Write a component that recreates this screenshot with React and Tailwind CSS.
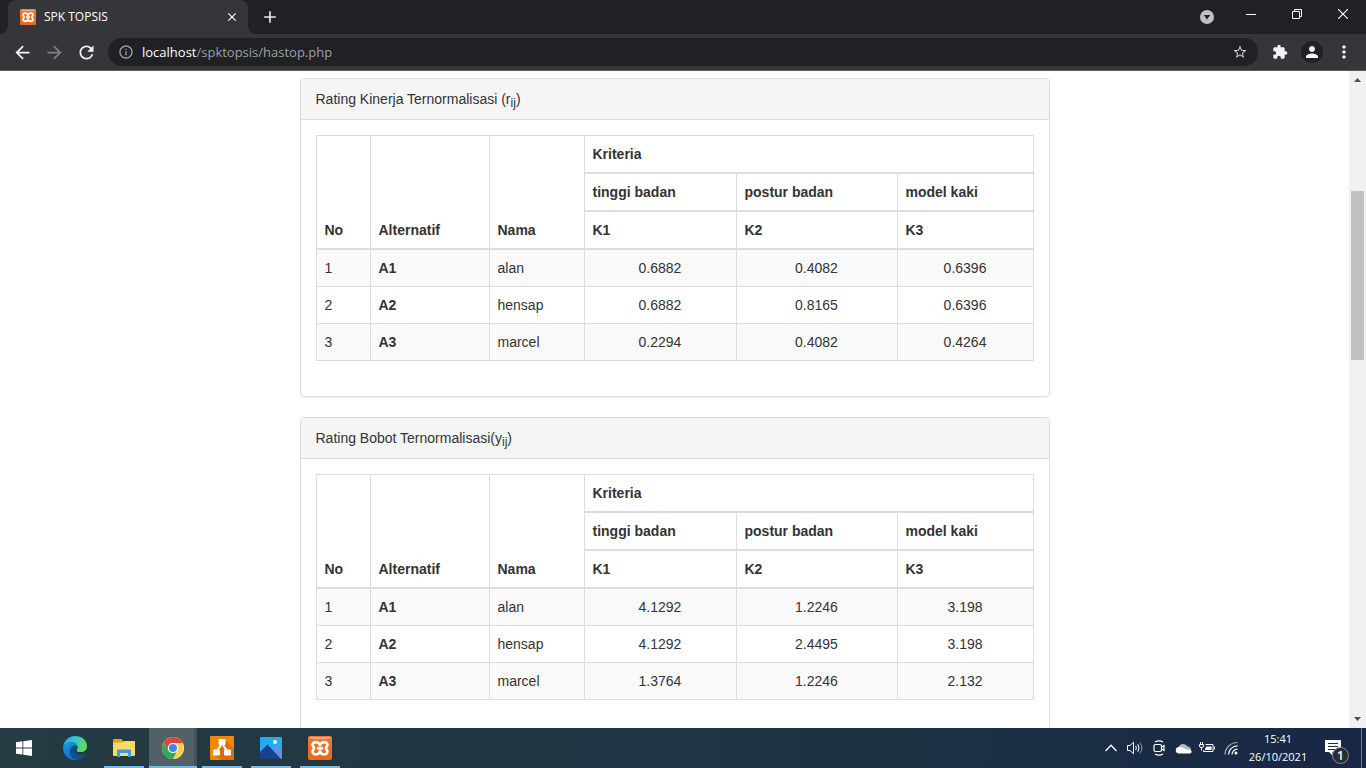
import React from "react";
import {
  MdAdd, MdArrowBack, MdArrowForward, MdClose, MdExtension, MdInfoOutline,
  MdMoreVert, MdPerson, MdRefresh, MdStarBorder,
} from "react-icons/md";

const people = [
  ["1", "A1", "alan"],
  ["2", "A2", "hensap"],
  ["3", "A3", "marcel"],
];

const panels = [
  {
    id: "r",
    title: "Rating Kinerja Ternormalisasi (r",
    values: [
      ["0.6882", "0.4082", "0.6396"],
      ["0.6882", "0.8165", "0.6396"],
      ["0.2294", "0.4082", "0.4264"],
    ],
  },
  {
    id: "y",
    title: "Rating Bobot Ternormalisasi(y",
    values: [
      ["4.1292", "1.2246", "3.198"],
      ["4.1292", "2.4495", "3.198"],
      ["1.3764", "1.2246", "2.132"],
    ],
  },
];

function Xampp({ className }) {
  return (
    <svg viewBox="0 0 24 24" className={className} aria-hidden="true">
      <defs>
        <linearGradient id="xg" x1="0" y1="0" x2="0" y2="1">
          <stop offset="0" stopColor="#e27a3c" />
          <stop offset="0.3" stopColor="#ee7526" />
          <stop offset="1" stopColor="#e8681a" />
        </linearGradient>
      </defs>
      <rect width="24" height="24" rx="2" fill="url(#xg)" />
      <path d="M2 1h20v1.500q-10 1.500-20 0z" fill="#f6b68e" opacity=".8" />
      <path
        d="M12 9.300C11.200 5.500 4.600 5 4.600 9c0 1.700 1.500 2 1.500 3.300s-1.500 1.600-1.500 3.300c0 4 6.600 3.500 7.400-.3.800 3.800 7.400 4.300 7.400.3 0-1.700-1.500-2-1.500-3.300s1.500-1.600 1.500-3.300c0-4-6.600-3.500-7.400.3z"
        fill="none" stroke="#fff" strokeWidth="2.700" strokeLinejoin="round"
      />
      <path d="M9 12.300h6" stroke="#fff" strokeWidth="2.700" />
    </svg>
  );
}

function WindowsLogo() {
  return (
    <svg viewBox="0 0 16 16" className="size-4" fill="#fff" aria-hidden="true">
      <path d="M0 2.200 6.500 1.300v6.200H0zM7.300 1.200 16 0v7.500H7.300zM0 8.400h6.500v6.200L0 13.700zM7.300 8.400H16V16l-8.700-1.200z" />
    </svg>
  );
}

function Edge() {
  return (
    <svg viewBox="0 0 24 24" className="size-6" aria-hidden="true">
      <defs>
        <linearGradient id="eg1" x1="0" y1="0" x2="1" y2="0.2">
          <stop offset="0" stopColor="#2aa5e0" />
          <stop offset="0.5" stopColor="#35c3d6" />
          <stop offset="1" stopColor="#5fdc5a" />
        </linearGradient>
        <linearGradient id="eg2" x1="0" y1="0" x2="0.5" y2="1">
          <stop offset="0" stopColor="#1b9de2" />
          <stop offset="1" stopColor="#0f6cbd" />
        </linearGradient>
      </defs>
      <path d="M.2 10.500C1 4.500 6 0 12 0c7 0 12 4.800 12 10.200 0 3.600-2.900 5.900-6.300 5.900-2.800 0-4.200-.9-4.200-1.700 0-.6 1.100-1.100 1.100-3 0-2.700-2.800-4.800-6.200-4.800C4.200 6.600 1 8.400.2 10.500z" fill="url(#eg1)" />
      <path d="M.1 11.300C.5 8.200 4 6.100 8.400 6.100c3.500 0 6.200 2.400 6.200 5.100-.6-1-1.600-1.500-2.700-1.500-2.600 0-4.300 2.300-4.300 5.100 0 4.400 3 8 7.300 9C6.500 25.500 0 20 .1 11.300z" fill="url(#eg2)" />
      <path d="M11.900 9.700c-2.600 0-5.100 2.500-5.100 6 0 4 3.200 7.800 7.700 8.100 3.300-.5 6-2.400 7.900-5.100.3-.5-.1-.9-.6-.7-5 2.100-10-.1-10.300-3.700-.1-1.700 1-2.600 1.900-3.200-.2-.8-.8-1.300-1.500-1.400z" fill="#0b5096" />
    </svg>
  );
}

function Explorer() {
  return (
    <svg viewBox="0 0 22 18" className="h-[18px] w-[22px]" aria-hidden="true">
      <path d="M0 1q0-1 1-1h7.500l2 2.500H22V8H0z" fill="#e5a00d" />
      <path d="M0 3.500h9.500L11 2h10q1 0 1 1v13q0 1-1 1H1q-1 0-1-1z" fill="#ffd868" />
      <path d="M4 18v-6.500q0-1 1-1h12q1 0 1 1V18h-3v-4H7v4z" fill="#3c9ade" />
    </svg>
  );
}

function Chrome() {
  return (
    <svg viewBox="0 0 48 48" className="size-[22px]" aria-hidden="true">
      <circle cx="24" cy="24" r="24" fill="#fff" />
      <path d="M24 13h20.800A24 24 0 0 1 24 48l10-18.500A11 11 0 0 0 24 13z" fill="#fdd23e" />
      <path d="M14.500 29.500 3.200 12A24 24 0 0 0 24 48l9.500-18.500A11 11 0 0 1 14.500 29.500z" fill="#34a853" />
      <path d="M44.800 12A24 24 0 0 0 3.200 12l11.300 17.500A11 11 0 0 1 24 13h21.200z" fill="#e04438" />
      <circle cx="24" cy="24" r="11" fill="#fff" />
      <circle cx="24" cy="24" r="8.800" fill="#4285f4" />
    </svg>
  );
}

function Drawio() {
  return (
    <svg viewBox="0 0 24 24" className="size-6" aria-hidden="true">
      <rect width="24" height="24" rx="1" fill="#f08705" />
      <path d="m15 4 9 9v11H11l-7-6 8-8z" fill="#df6c0c" />
      <path d="M11 9 7 15M13 9l4 6" stroke="#fff" strokeWidth="2" />
      <rect x="8.500" y="3" width="7" height="6" rx="1" fill="#fff" />
      <rect x="3" y="13.500" width="7" height="6" rx="1" fill="#fff" />
      <rect x="14" y="13.500" width="7" height="6" rx="1" fill="#fff" />
    </svg>
  );
}

function Photos() {
  return (
    <svg viewBox="0 0 22 22" className="size-[22px]" aria-hidden="true">
      <rect width="22" height="22" rx="1" fill="#27aaf0" />
      <path d="m11 15 6-6 5 5v8H11z" fill="#6b8fe0" />
      <path d="M0 15 7.500 7.500 21 22H1q-1 0-1-1z" fill="#17448c" />
      <circle cx="15" cy="5" r="2" fill="#fff" />
    </svg>
  );
}

const apps = [
  { name: "Microsoft Edge", icon: <Edge />, line: "" },
  { name: "File Explorer", icon: <Explorer />, line: "running" },
  { name: "Google Chrome", icon: <Chrome />, line: "active" },
  { name: "draw.io", icon: <Drawio />, line: "running" },
  { name: "Photos", icon: <Photos />, line: "running" },
  { name: "XAMPP", icon: <Xampp className="size-6" />, line: "running" },
];

function TabStrip() {
  return (
    <header className="flex h-[34px] shrink-0 items-stretch bg-[#202124] text-[#e8eaed]">
      <svg viewBox="0 0 8 8" className="size-2 self-end" aria-hidden="true">
        <path d="M8 0v8H0a8 8 0 0 0 8-8z" fill="#35363a" />
      </svg>
      <div className="flex w-60 items-center rounded-t-lg bg-[#35363a] pl-3 pr-2">
        <Xampp className="size-4" />
        <span className="ml-2 flex-1 text-[12px] leading-4 text-white">SPK TOPSIS</span>
        <button aria-label="Close tab" className="flex size-4 items-center justify-center text-white">
          <MdClose className="size-3.5" />
        </button>
      </div>
      <svg viewBox="0 0 8 8" className="size-2 self-end" aria-hidden="true">
        <path d="M0 0v8h8a8 8 0 0 1-8-8z" fill="#35363a" />
      </svg>
      <button aria-label="New tab" className="flex w-7 items-center justify-center">
        <MdAdd className="size-5" />
      </button>
      <div className="flex-1" />
      <button aria-label="Search tabs" className="flex w-[42px] items-center justify-center">
        <svg viewBox="0 0 14 14" className="size-3.5" aria-hidden="true">
          <circle cx="7" cy="7" r="7" fill="#bdc1c6" />
          <path d="M3.800 5h6.400L7 9.500z" fill="#202124" />
        </svg>
      </button>
      <div className="flex h-7 text-white">
        <button aria-label="Minimize" className="flex w-[46px] items-center justify-center">
          <span className="h-px w-2.5 bg-white" />
        </button>
        <button aria-label="Restore" className="flex w-[46px] items-center justify-center">
          <svg viewBox="0 0 10 10" className="size-2.5" fill="none" stroke="currentColor" aria-hidden="true">
            <path d="M.5 2.500h7v7h-7zM2.500 2.500v-2h7v7h-2" />
          </svg>
        </button>
        <button aria-label="Close" className="flex w-[46px] items-center justify-center">
          <svg viewBox="0 0 10 10" className="size-2.5" fill="none" stroke="currentColor" strokeWidth="1.100" aria-hidden="true">
            <path d="m0 0 10 10M10 0 0 10" />
          </svg>
        </button>
      </div>
    </header>
  );
}

function Toolbar() {
  return (
    <nav className="flex h-[37px] shrink-0 items-center gap-1.5 border-b border-[#5c5b60] bg-[#35363a] px-1.5 text-[#f1f3f4]">
      <div className="flex">
        <button aria-label="Back" className="flex size-8 items-center justify-center">
          <MdArrowBack className="size-[21px]" />
        </button>
        <button aria-label="Forward" className="flex size-8 items-center justify-center text-[#7d7e82]">
          <MdArrowForward className="size-[21px]" />
        </button>
        <button aria-label="Reload" className="flex size-8 items-center justify-center">
          <MdRefresh className="size-[21px]" />
        </button>
      </div>
      <div className="flex h-7 flex-1 items-center rounded-full bg-[#202124] px-2.5 text-[13px] leading-5">
        <MdInfoOutline className="size-4 text-[#9aa0a6]" />
        <label htmlFor="address" className="ml-2 text-white">localhost</label>
        <input
          id="address"
          defaultValue="/spktopsis/hastop.php"
          className="min-w-0 flex-1 bg-transparent text-[#9aa0a6] outline-none"
        />
        <button aria-label="Bookmark this page" className="text-[#c4c7cb]">
          <MdStarBorder className="size-4" />
        </button>
      </div>
      <div className="flex">
        <button aria-label="Extensions" className="flex size-8 items-center justify-center">
          <MdExtension className="size-4" />
        </button>
        <button aria-label="Profile" className="flex size-8 items-center justify-center">
          <span className="flex size-[22px] items-center justify-center rounded-full bg-[#202124]">
            <MdPerson className="size-[18px]" />
          </span>
        </button>
        <button aria-label="Menu" className="flex size-8 items-center justify-center">
          <MdMoreVert className="size-5" />
        </button>
      </div>
    </nav>
  );
}

const head = "border border-b-2 border-[#ddd] p-2 text-left align-bottom font-bold";
const cell = "border border-[#ddd] p-2";

function Panel({ title, values }) {
  return (
    <section className="mb-5 rounded border border-[#ddd] bg-white shadow-[0_1px_1px_rgba(0,0,0,0.05)]">
      <h2 className="rounded-t-[3px] border-b border-[#ddd] bg-[#f5f5f5] px-[15px] py-2.5">
        {title}
        <sub className="text-[12px]">ij</sub>)
      </h2>
      <div className="p-[15px]">
        <table className="mb-5 w-full table-fixed border-collapse border border-[#ddd]">
          <colgroup>
            <col className="w-[54px]" />
            <col className="w-[119px]" />
            <col className="w-[95px]" />
            <col className="w-[152px]" />
            <col className="w-[161px]" />
            <col className="w-[136px]" />
          </colgroup>
          <thead>
            <tr>
              <th rowSpan={3} className={head}>No</th>
              <th rowSpan={3} className={head}>Alternatif</th>
              <th rowSpan={3} className={head}>Nama</th>
              <th colSpan={3} className={head}>Kriteria</th>
            </tr>
            <tr>
              <th className={head}>tinggi badan</th>
              <th className={head}>postur badan</th>
              <th className={head}>model kaki</th>
            </tr>
            <tr>
              <th className={head}>K1</th>
              <th className={head}>K2</th>
              <th className={head}>K3</th>
            </tr>
          </thead>
          <tbody>
            {people.map(([no, code, name], i) => (
              <tr key={code} className="odd:bg-[#f9f9f9]">
                <td className={cell}>{no}</td>
                <td className="border border-[#ddd] p-2 font-bold">{code}</td>
                <td className={cell}>{name}</td>
                {values[i].map((v, k) => (
                  <td key={k} className="border border-[#ddd] p-2 text-center">{v}</td>
                ))}
              </tr>
            ))}
          </tbody>
        </table>
      </div>
    </section>
  );
}

function Scrollbar() {
  return (
    <div className="flex w-[17px] shrink-0 flex-col items-center bg-[#f1f1f1]" aria-hidden="true">
      <svg viewBox="0 0 17 17" className="size-[17px] shrink-0" fill="#505050">
        <path d="M5 11h7L8.500 7z" />
      </svg>
      <div className="grow-[103]" />
      <div className="w-[13px] grow-[169] bg-[#c1c1c1]" />
      <div className="grow-[351]" />
      <svg viewBox="0 0 17 17" className="size-[17px] shrink-0" fill="#505050">
        <path d="M5 6h7l-3.500 4z" />
      </svg>
    </div>
  );
}

function Tray() {
  const item = "flex w-6 items-center justify-center";
  return (
    <div className="flex text-white">
      <button aria-label="Show hidden icons" className={item}>
        <svg viewBox="0 0 12 8" className="h-2 w-3" fill="none" stroke="currentColor" strokeWidth="1.300" aria-hidden="true">
          <path d="M.5 7 6 1.300 11.500 7" />
        </svg>
      </button>
      <button aria-label="Volume" className={item}>
        <svg viewBox="0 0 16 16" className="size-4" fill="none" stroke="currentColor" aria-hidden="true">
          <path d="M.5 5.500h2.500L6.500 2.300v11.400L3 10.500H.5z" />
          <path d="M8.700 5.800q1.300 2.200 0 4.400" />
          <path d="M10.800 4.200q2.500 3.800 0 7.600" />
          <path d="M13 2.600q3.700 5.400 0 10.800" opacity=".5" />
        </svg>
      </button>
      <button aria-label="Meet now" className={item}>
        <svg viewBox="0 0 16 16" className="size-4" fill="none" stroke="currentColor" strokeWidth="1.200" aria-hidden="true">
          <path d="M4 2Q8-.4 12 2M4 14q4 2.400 8 0" />
          <rect x="3" y="4.500" width="7.500" height="7" rx="1.500" />
          <path d="m10.500 7 2.500-1.500v5L10.500 9" />
        </svg>
      </button>
      <button aria-label="OneDrive" className={item}>
        <svg viewBox="0 0 17 11" className="h-[11px] w-[17px]" aria-hidden="true">
          <path d="M3.500 4A5 5 0 0 1 12.500 3.500 4 4 0 0 1 16 7L9 9z" fill="#b4bac6" />
          <path d="M3.500 10.500A3.300 3.300 0 0 1 3.500 4Q6 3.500 8 5l4 1.800q4-1 4.600 1.500.2 2.200-2.100 2.200z" fill="#fff" />
        </svg>
      </button>
      <button aria-label="Battery" className={item}>
        <svg viewBox="0 0 16 12" className="h-3 w-4" fill="none" stroke="currentColor" aria-hidden="true">
          <path d="M6.500 2.500h7.500v7H4.500V8M15.500 4.500v3" />
          <path d="M7.500 4.500H12.500v3.500H6V6.500z" fill="currentColor" stroke="none" />
          <path d="M1.500 0v2M3.500 0v2M.5 2.500h4v1.500q0 1.500-2 1.500t-2-1.500zM2.500 5.500v3" />
        </svg>
      </button>
      <button aria-label="Network" className={item}>
        <svg viewBox="0 0 14 14" className="size-3.5" fill="none" stroke="currentColor" strokeWidth="1.200" aria-hidden="true">
          <path d="M1 13.500A12.500 12.500 0 0 1 13.500 1.500" opacity=".6" />
          <path d="M4.500 13.500A9 9 0 0 1 13.500 4.800M8 13.500A5.500 5.500 0 0 1 13.500 8.200" />
          <circle cx="12" cy="12" r="1.500" fill="currentColor" stroke="none" />
        </svg>
      </button>
      <button className="flex w-[70px] flex-col items-center justify-center text-[11px] leading-[18px]">
        <span>15:41</span>
        <span>26/10/2021</span>
      </button>
      <button aria-label="Notifications, 1 new" className="flex w-12 items-center justify-center">
        <span className="relative size-6">
          <svg viewBox="0 0 24 24" className="size-6" aria-hidden="true">
            <path d="M0 4h16v12H7.500v3.500L4 16H0z" fill="#fff" />
            <path d="M3 7.500h10M3 10.500h10M3 13.500h7" stroke="#1b2b47" />
          </svg>
          <span className="absolute right-0 -bottom-1 flex size-[17px] items-center justify-center rounded-full border border-[#8b8f96] bg-[#2b2d31] text-[12px] font-semibold leading-3">
            1
          </span>
        </span>
      </button>
      <button aria-label="Show desktop" className="w-[5px] border-l border-[#6f7b8e]" />
    </div>
  );
}

function Taskbar() {
  return (
    <footer className="flex h-10 shrink-0 bg-linear-to-r from-[#243b43] via-[#1f3644] to-[#182745]">
      <button aria-label="Start" className="flex w-[51px] items-center justify-center pr-[3px]">
        <WindowsLogo />
      </button>
      <div className="flex gap-px">
        {apps.map((app) => (
          <button
            key={app.name}
            aria-label={app.name}
            className={
              app.line === "active"
                ? "flex w-12 flex-col items-center bg-[#526168] shadow-[inset_-3px_0_0_#465257]"
                : "flex w-12 flex-col items-center"
            }
          >
            <span className="flex w-full flex-1 items-center justify-center pt-0.5">{app.icon}</span>
            <span
              className={
                app.line === "active"
                  ? "h-0.5 w-full bg-[#76b9ed]"
                  : app.line === "running"
                    ? "h-0.5 w-10 bg-[#76b9ed]"
                    : "h-0.5 w-10"
              }
            />
          </button>
        ))}
      </div>
      <div className="flex-1" />
      <Tray />
    </footer>
  );
}

export default function App() {
  return (
    <div className="flex h-screen flex-col overflow-hidden font-['Open_Sans',sans-serif]">
      <TabStrip />
      <Toolbar />
      <div className="flex min-h-0 flex-1 bg-white">
        <main className="min-w-0 flex-1 overflow-hidden pt-[7px] font-['Liberation_Sans',Arial,sans-serif] text-[14px] leading-5 text-[#333]">
          <div className="mx-auto max-w-[750px]">
            {panels.map((p) => (
              <Panel key={p.id} title={p.title} values={p.values} />
            ))}
          </div>
        </main>
        <Scrollbar />
      </div>
      <Taskbar />
    </div>
  );
}
